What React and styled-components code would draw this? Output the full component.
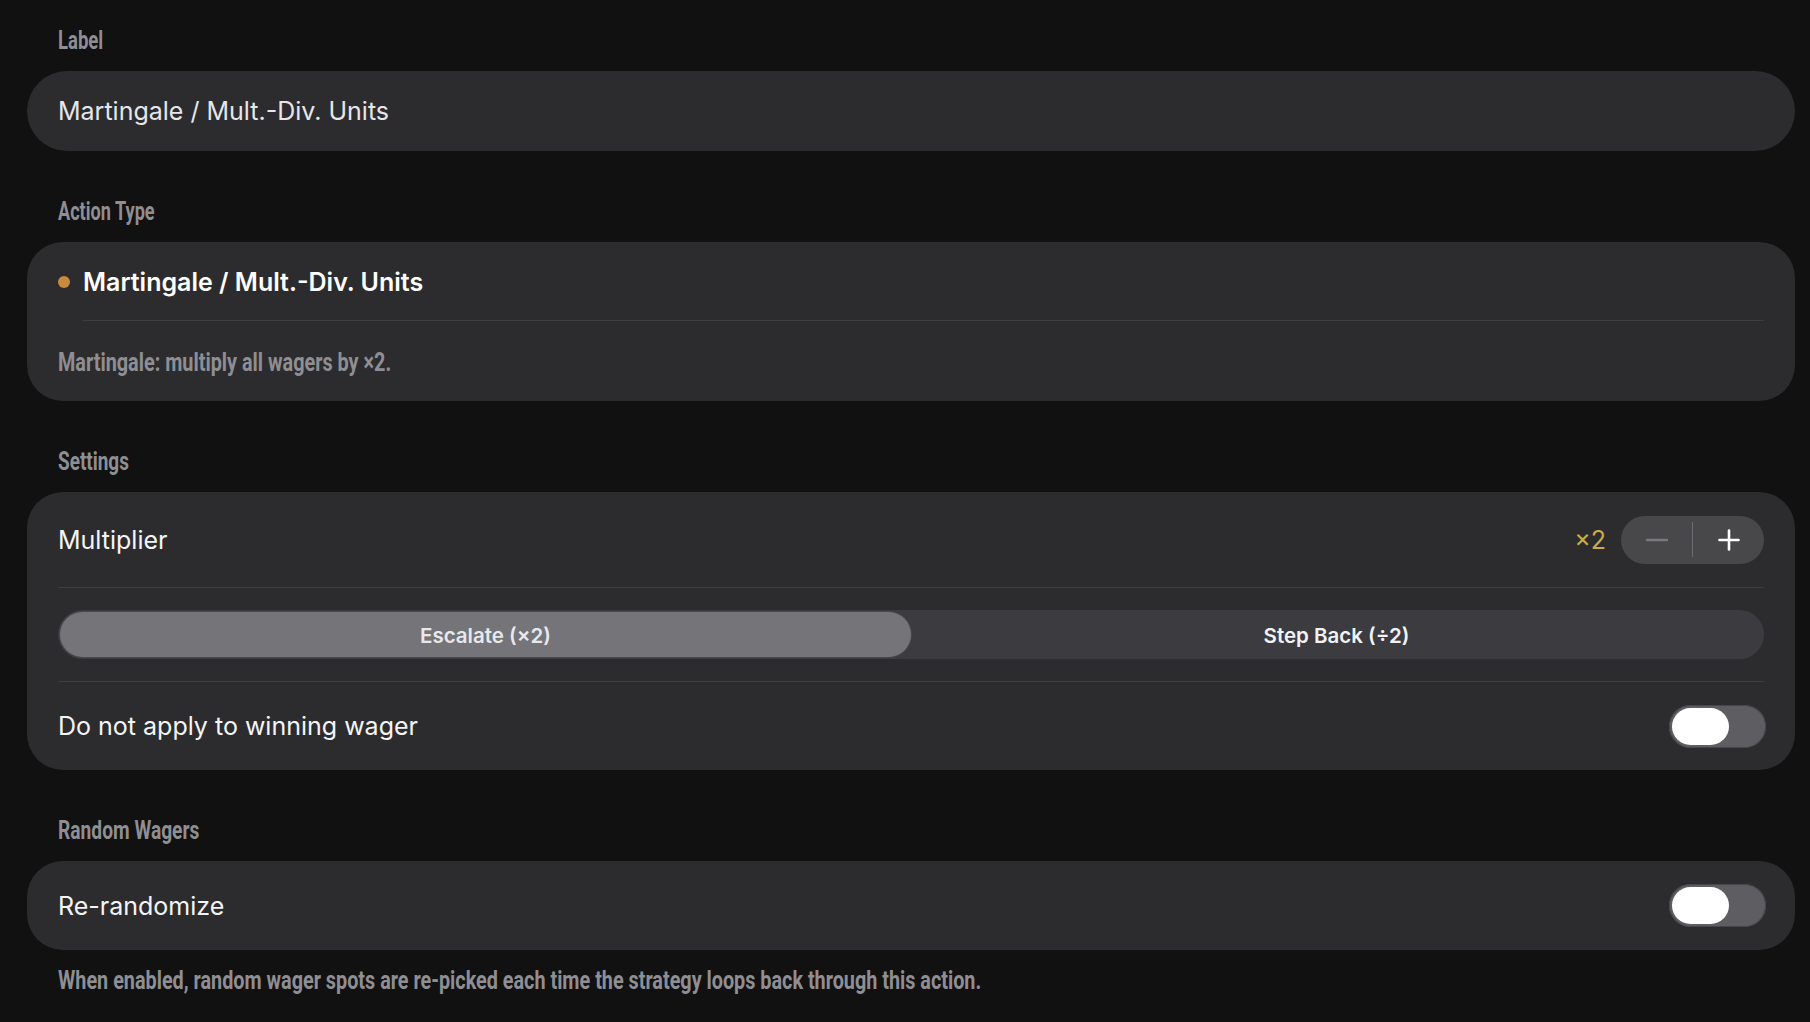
import React from "react";
import styled, { createGlobalStyle } from "styled-components";

const GlobalStyle = createGlobalStyle`
  html, body { margin: 0; padding: 0; background: #111112; }
  body { font-family: Inter, "Noto Sans", sans-serif; -webkit-font-smoothing: antialiased; }
  * { box-sizing: border-box; }
`;

const Page = styled.div`
  display: flex;
  flex-direction: column;
  padding: 28px 15px 30px 27px;
`;

const Section = styled.section`
  display: flex;
  flex-direction: column;
  & + & { margin-top: 48px; }
`;

const Condensed = styled.span`
  display: inline-block;
  font-family: Roboto, "DejaVu Sans", sans-serif;
  font-weight: 700;
  font-size: 25px;
  line-height: 25px;
  color: #8e8e93;
  white-space: nowrap;
  transform: scaleX(${(p) => p.$scale || 0.76});
  transform-origin: left center;
`;

const SectionLabel = styled.div`
  padding-left: 31px;
  height: 24px;
  margin-bottom: 19px;
`;

const Card = styled.div`
  background: #2c2c2e;
  border-radius: ${(p) => (p.$pill ? "40px" : "36px")};
  display: flex;
  flex-direction: column;
  padding: 0 31px;
`;

const FieldRow = styled.div`
  height: ${(p) => p.$h || 80}px;
  display: flex;
  align-items: center;
  justify-content: space-between;
  gap: 16px;
`;

const BodyText = styled.span`
  font-size: 25px;
  line-height: 30px;
  color: ${(p) => (p.$muted ? "#e6e6ea" : "#f4f4f6")};
  white-space: nowrap;
`;

const TitleRow = styled.div`
  height: 78px;
  display: flex;
  align-items: center;
  gap: 13px;
  padding-top: 2px;
`;

const Dot = styled.span`
  width: 12px;
  height: 12px;
  border-radius: 50%;
  background: #c88a3e;
  flex: none;
`;

const Title = styled.span`
  font-size: 25px;
  line-height: 30px;
  font-weight: 600;
  color: #ffffff;
  white-space: nowrap;
`;

const Divider = styled.div`
  height: 1px;
  background: #3e3e41;
  margin-left: ${(p) => p.$indent || 0}px;
`;

const DescRow = styled.div`
  height: 80px;
  display: flex;
  align-items: center;
  padding-top: 3px;
`;

const Controls = styled.div`
  display: flex;
  align-items: center;
  gap: 15px;
`;

const Value = styled.span`
  font-size: 25px;
  line-height: 30px;
  color: #cdaa4c;
`;

const Stepper = styled.div`
  width: 143px;
  height: 48px;
  border-radius: 24px;
  background: #48484b;
  display: flex;
  align-items: center;
`;

const StepButton = styled.button`
  flex: 1;
  height: 100%;
  border: none;
  background: transparent;
  display: flex;
  align-items: center;
  justify-content: center;
  padding: 0;
  color: ${(p) => (p.$disabled ? "#7a7a7e" : "#ffffff")};
`;

const StepDivider = styled.span`
  width: 1px;
  height: 35px;
  background: #6c6c70;
`;

const SegmentTrack = styled.div`
  flex: 1;
  height: 49px;
  border-radius: 25px;
  background: #3b3b40;
  display: grid;
  grid-template-columns: 1fr 1fr;
  padding: 2px;
`;

const Segment = styled.button`
  border: none;
  border-radius: 23px;
  font-family: Inter, sans-serif;
  font-size: 20.5px;
  font-weight: 600;
  color: ${(p) => (p.$active ? "#e8e8ec" : "#f2f2f5")};
  background: ${(p) => (p.$active ? "#747479" : "transparent")};
  box-shadow: ${(p) => (p.$active ? "0 0 0 1px #48484c" : "none")};
  padding: 2px 0 0;
`;

const Toggle = styled.div`
  width: 97px;
  height: 43px;
  border-radius: 22px;
  background: #5e5e62;
  box-shadow: inset 0 0 0 1px #46464a;
  display: flex;
  align-items: center;
  padding: 0 3px;
  flex: none;
  margin-right: -2px;
`;

const Knob = styled.span`
  width: 57px;
  height: 37px;
  border-radius: 19px;
  background: #ffffff;
`;

const Footnote = styled.div`
  margin-top: 18px;
  padding-left: 31px;
  height: 24px;
`;

const MinusIcon = () => (
  <svg width="24" height="24" viewBox="0 0 24 24">
    <line x1="2" y1="12" x2="22" y2="12" stroke="currentColor" strokeWidth="2.4" strokeLinecap="round" />
  </svg>
);

const PlusIcon = () => (
  <svg width="24" height="24" viewBox="0 0 24 24">
    <line x1="2.5" y1="12" x2="21.5" y2="12" stroke="currentColor" strokeWidth="2.6" strokeLinecap="round" />
    <line x1="12" y1="2.5" x2="12" y2="21.5" stroke="currentColor" strokeWidth="2.6" strokeLinecap="round" />
  </svg>
);

export default function App() {
  return (
    <>
      <GlobalStyle />
      <Page>
        <Section>
          <SectionLabel><Condensed $scale={0.74}>Label</Condensed></SectionLabel>
          <Card $pill>
            <FieldRow $h={80}>
              <BodyText $muted>Martingale / Mult.-Div. Units</BodyText>
            </FieldRow>
          </Card>
        </Section>

        <Section>
          <SectionLabel><Condensed $scale={0.725}>Action Type</Condensed></SectionLabel>
          <Card>
            <TitleRow>
              <Dot />
              <Title>Martingale / Mult.-Div. Units</Title>
            </TitleRow>
            <Divider $indent={25} />
            <DescRow>
              <Condensed $scale={0.793}>Martingale: multiply all wagers by ×2.</Condensed>
            </DescRow>
          </Card>
        </Section>

        <Section>
          <SectionLabel><Condensed $scale={0.758}>Settings</Condensed></SectionLabel>
          <Card>
            <FieldRow $h={95}>
              <BodyText>Multiplier</BodyText>
              <Controls>
                <Value>×2</Value>
                <Stepper>
                  <StepButton $disabled aria-label="Decrease"><MinusIcon /></StepButton>
                  <StepDivider />
                  <StepButton aria-label="Increase"><PlusIcon /></StepButton>
                </Stepper>
              </Controls>
            </FieldRow>
            <Divider />
            <FieldRow $h={93}>
              <SegmentTrack>
                <Segment $active>Escalate (×2)</Segment>
                <Segment>Step Back (÷2)</Segment>
              </SegmentTrack>
            </FieldRow>
            <Divider />
            <FieldRow $h={88}>
              <BodyText>Do not apply to winning wager</BodyText>
              <Toggle><Knob /></Toggle>
            </FieldRow>
          </Card>
        </Section>

        <Section>
          <SectionLabel><Condensed $scale={0.768}>Random Wagers</Condensed></SectionLabel>
          <Card>
            <FieldRow $h={89}>
              <BodyText>Re-randomize</BodyText>
              <Toggle><Knob /></Toggle>
            </FieldRow>
          </Card>
          <Footnote>
            <Condensed $scale={0.792}>When enabled, random wager spots are re-picked each time the strategy loops back through this action.</Condensed>
          </Footnote>
        </Section>
      </Page>
    </>
  );
}
